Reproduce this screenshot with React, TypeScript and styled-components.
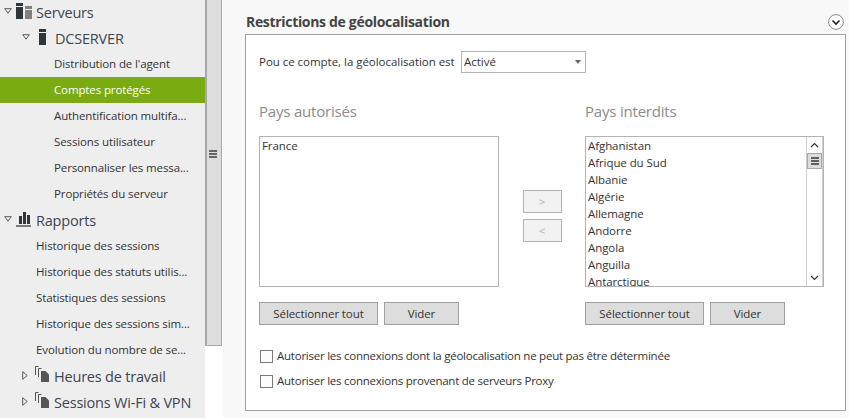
import React from 'react';
import styled, { createGlobalStyle } from 'styled-components';

const GlobalStyle = createGlobalStyle`
  html, body {
    margin: 0;
    padding: 0;
    overflow: hidden;
    background: #f8f8f8;
    font-family: 'Open Sans', 'Noto Sans', sans-serif;
  }
  * { box-sizing: border-box; }
`;

const Page = styled.div`
  display: flex;
  width: 849px;
  height: 418px;
  overflow: hidden;
`;

const Sidebar = styled.nav`
  flex: none;
  width: 205px;
  height: 418px;
  background: #eeeeee;
  overflow: hidden;
`;

const SidebarList = styled.div`
  margin-top: -1px;
`;

const TreeRow = styled.div<{ $indent: number; $selected?: boolean }>`
  display: flex;
  align-items: center;
  height: 26px;
  padding-left: ${p => p.$indent}px;
  padding-bottom: 2px;
  background: ${p => (p.$selected ? '#7aab10' : 'transparent')};
  color: ${p => (p.$selected ? '#ffffff' : '#333333')};
  font-size: 11.5px;
  letter-spacing: -0.12px;
  white-space: nowrap;
`;

const GroupRow = styled(TreeRow)`
  padding-bottom: 0;
  font-size: 14.5px;
  letter-spacing: -0.2px;
  color: #3c4650;
`;

const Caret = styled.svg<{ $gap: number }>`
  flex: none;
  margin-right: ${p => p.$gap}px;
  margin-bottom: 2px;
`;

const NodeIcon = styled.svg<{ $gap: number; $lift?: number }>`
  flex: none;
  margin-right: ${p => p.$gap}px;
  margin-bottom: ${p => p.$lift ?? 2}px;
`;

const SideScroll = styled.div`
  flex: none;
  display: flex;
  flex-direction: column;
  width: 17px;
  height: 418px;
  background: #ffffff;
`;

const SideThumb = styled.div`
  display: flex;
  flex-direction: column;
  align-items: center;
  gap: 1px;
  height: 346px;
  padding: 150px 2px 0 0;
  background: #dddddd;
  border-left: 2px solid #a8a8a8;
  border-right: 1px solid #a8a8a8;
  border-bottom: 1px solid #a8a8a8;
`;

const GripLine = styled.span`
  display: block;
  width: 8px;
  height: 2px;
  background: #666666;
`;

const Main = styled.main`
  flex: 1;
  min-width: 0;
  padding: 0 3px 0 22px;
  background: #f8f8f8;
  border-left: 1px solid #ffffff;
`;

const SectionHeader = styled.header`
  display: flex;
  align-items: center;
  justify-content: space-between;
  height: 34px;
  padding: 9px 2px 0 1px;
`;

const SectionTitle = styled.h2`
  margin: 0;
  font-size: 14px;
  font-weight: 700;
  letter-spacing: -0.32px;
  color: #444444;
`;

const Panel = styled.section`
  height: 377px;
  padding: 16px 20px 0 13px;
  background: #ffffff;
  border: 1px solid #a0a0a0;
`;

const StatusRow = styled.div`
  display: flex;
  align-items: center;
  height: 22px;
  color: #333333;
  font-size: 11.5px;
  letter-spacing: -0.03px;
`;

const StatusLabel = styled.span`
  flex: none;
  width: 202px;
  padding-bottom: 2px;
`;

const Select = styled.div`
  display: flex;
  align-items: center;
  justify-content: space-between;
  width: 125px;
  height: 22px;
  padding: 0 4px 2px 2px;
  border: 1px solid #b4b4b4;
  background: #ffffff;
`;

const SelectArrow = styled.span`
  width: 0;
  height: 0;
  margin-top: 2px;
  border-left: 3.5px solid transparent;
  border-right: 3.5px solid transparent;
  border-top: 4px solid #666666;
`;

const Transfer = styled.div`
  display: grid;
  grid-template-columns: 240px 86px 239px;
  grid-template-rows: 63px 151px 38px;
`;

const ColumnTitle = styled.h3`
  margin: 0;
  padding-top: 28px;
  font-size: 15px;
  font-weight: 400;
  letter-spacing: -0.2px;
  color: #8b8b8b;
`;

const ListBox = styled.div`
  position: relative;
  height: 151px;
  padding: 0 2px;
  overflow: hidden;
  background: #ffffff;
  border: 1px solid #b4b4b4;
`;

const ListItem = styled.div`
  height: 17px;
  line-height: 17px;
  font-size: 11.5px;
  letter-spacing: -0.08px;
  color: #333333;
`;

/* sits over the list content like the native scrollbar */
const ListScroll = styled.div`
  position: absolute;
  top: 0;
  right: 0;
  bottom: 0;
  display: flex;
  flex-direction: column;
  width: 17px;
  background: #ffffff;
  border-left: 1px solid #cfcfcf;
  border-right: 1px solid #cfcfcf;
`;

const ScrollButton = styled.div`
  display: flex;
  align-items: center;
  justify-content: center;
  flex: none;
  height: 16px;
`;

const ScrollThumb = styled.div`
  display: flex;
  flex-direction: column;
  align-items: center;
  justify-content: center;
  gap: 1px;
  flex: none;
  height: 16px;
  background: #dcdcdc;
  border: 1px solid #a8a8a8;
`;

const ThumbLine = styled.span`
  display: block;
  width: 8px;
  height: 2px;
  background: #606060;
`;

const ScrollTrack = styled.div`
  flex: 1;
`;

const MoveButtons = styled.div`
  display: flex;
  flex-direction: column;
  align-items: center;
  gap: 6px;
  padding-top: 54px;
`;

const MoveButton = styled.button`
  width: 39px;
  height: 23px;
  padding: 0;
  background: #f2f2f2;
  border: 1px solid #b4b4b4;
  color: #b0b0b0;
  font-family: inherit;
  font-size: 11.5px;
`;

const ActionRow = styled.div`
  display: flex;
  gap: 6px;
  padding-top: 15px;
`;

const ActionButton = styled.button<{ $width: number }>`
  width: ${p => p.$width}px;
  height: 23px;
  padding: 0;
  background: #dddddd;
  border: 1px solid #a0a0a0;
  color: #333333;
  font-family: inherit;
  font-size: 11.5px;
  letter-spacing: -0.1px;
`;

const Options = styled.div`
  display: flex;
  flex-direction: column;
  gap: 11px;
  margin-top: 24px;
  padding-left: 1px;
`;

const OptionRow = styled.label`
  display: flex;
  align-items: center;
  gap: 4px;
  height: 14px;
  font-size: 11.5px;
  letter-spacing: -0.24px;
  color: #333333;
  white-space: nowrap;
`;

const OptionText = styled.span`
  padding-bottom: 2px;
`;

const CheckBox = styled.span`
  flex: none;
  width: 13px;
  height: 13px;
  background: #fcfcfc;
  border: 1px solid #7a7a7a;
`;

const CaretDown = ({ gap = 4 }: { gap?: number }) => (
  <Caret $gap={gap} width="8" height="6" viewBox="0 0 8 6" fill="none">
    <path d="M0.7 0.7H7.3L4 5.2Z" stroke="#5a5a5a" strokeWidth="1" />
  </Caret>
);

const CaretRight = () => (
  <Caret $gap={7} width="6" height="9" viewBox="0 0 6 9" fill="none">
    <path d="M0.7 0.7V8.3L5.2 4.5Z" stroke="#5a5a5a" strokeWidth="1" />
  </Caret>
);

const ServersIcon = () => (
  <NodeIcon $gap={4} width="16" height="17" viewBox="0 0 16 17">
    <rect x="0" y="0" width="7" height="3" fill="#2f363b" />
    <rect x="0" y="4" width="7" height="12" fill="#2f363b" />
    <rect x="9" y="3" width="7" height="3" fill="#808080" />
    <rect x="9" y="7" width="7" height="9" fill="#808080" />
  </NodeIcon>
);

const ServerIcon = () => (
  <NodeIcon $gap={9} width="7" height="17" viewBox="0 0 7 17">
    <rect x="0" y="0" width="7" height="3" fill="#2f363b" />
    <rect x="0" y="4" width="7" height="12" fill="#2f363b" />
  </NodeIcon>
);

const ChartIcon = () => (
  <NodeIcon $gap={4} width="16" height="16" viewBox="0 0 16 16">
    <rect x="3" y="5" width="3" height="8" fill="#2f363b" />
    <rect x="7" y="1" width="3" height="12" fill="#2f363b" />
    <rect x="11" y="4" width="3" height="9" fill="#2f363b" />
    <rect x="0" y="14" width="15" height="2" fill="#7a7a7a" />
  </NodeIcon>
);

const PagesIcon = () => (
  <NodeIcon $gap={5} $lift={4} width="14" height="16" viewBox="0 0 14 16">
    <path d="M0.5 0.5H3.5M0.5 0.5V9" stroke="#555" fill="none" />
    <path d="M3.5 2.5H6.5M3.5 2.5V11" stroke="#555" fill="none" />
    <path d="M6 5H10.5L14 8.5V16H6Z" fill="#555" />
  </NodeIcon>
);

const ChevronCircle = () => (
  <svg width="16" height="16" viewBox="0 0 16 16" fill="none">
    <circle cx="8" cy="8" r="7.4" stroke="#8a8a8a" fill="#ffffff" />
    <path d="M4.5 6.5L8 10L11.5 6.5" stroke="#222" strokeWidth="1.6" />
  </svg>
);

const serverRows = [
  'Distribution de l\'agent',
  'Comptes protégés',
  'Authentification multifa...',
  'Sessions utilisateur',
  'Personnaliser les messa...',
  'Propriétés du serveur',
];

const reportRows = [
  'Historique des sessions',
  'Historique des statuts utilis...',
  'Statistiques des sessions',
  'Historique des sessions sim...',
  'Evolution du nombre de se...',
];

const countries = [
  'Afghanistan',
  'Afrique du Sud',
  'Albanie',
  'Algérie',
  'Allemagne',
  'Andorre',
  'Angola',
  'Anguilla',
  'Antarctique',
];

const App: React.FC = () => {
  return (
    <Page>
      <GlobalStyle />
      <Sidebar>
        <SidebarList>
          <GroupRow $indent={4}>
            <CaretDown />
            <ServersIcon />
            Serveurs
          </GroupRow>
          <GroupRow $indent={22}>
            <CaretDown gap={9} />
            <ServerIcon />
            DCSERVER
          </GroupRow>
          {serverRows.map(row => (
            <TreeRow key={row} $indent={54} $selected={row === 'Comptes protégés'}>
              {row}
            </TreeRow>
          ))}
          <GroupRow $indent={4}>
            <CaretDown />
            <ChartIcon />
            Rapports
          </GroupRow>
          {reportRows.map(row => (
            <TreeRow key={row} $indent={36}>
              {row}
            </TreeRow>
          ))}
          <GroupRow $indent={22}>
            <CaretRight />
            <PagesIcon />
            Heures de travail
          </GroupRow>
          <GroupRow $indent={22}>
            <CaretRight />
            <PagesIcon />
            Sessions Wi-Fi &amp; VPN
          </GroupRow>
        </SidebarList>
      </Sidebar>
      <SideScroll>
        <SideThumb>
          <GripLine />
          <GripLine />
          <GripLine />
        </SideThumb>
      </SideScroll>
      <Main>
        <SectionHeader>
          <SectionTitle>Restrictions de géolocalisation</SectionTitle>
          <ChevronCircle />
        </SectionHeader>
        <Panel>
          <StatusRow>
            <StatusLabel>Pou ce compte, la géolocalisation est</StatusLabel>
            <Select>
              Activé
              <SelectArrow />
            </Select>
          </StatusRow>
          <Transfer>
            <ColumnTitle>Pays autorisés</ColumnTitle>
            <span />
            <ColumnTitle>Pays interdits</ColumnTitle>
            <ListBox>
              <ListItem>France</ListItem>
            </ListBox>
            <MoveButtons>
              <MoveButton>&gt;</MoveButton>
              <MoveButton>&lt;</MoveButton>
            </MoveButtons>
            <ListBox>
              {countries.map(country => (
                <ListItem key={country}>{country}</ListItem>
              ))}
              <ListScroll>
                <ScrollButton>
                  <svg width="9" height="6" viewBox="0 0 9 6" fill="none">
                    <path d="M1 5L4.5 1.5L8 5" stroke="#333" strokeWidth="1.2" />
                  </svg>
                </ScrollButton>
                <ScrollThumb>
                  <ThumbLine />
                  <ThumbLine />
                  <ThumbLine />
                </ScrollThumb>
                <ScrollTrack />
                <ScrollButton>
                  <svg width="9" height="6" viewBox="0 0 9 6" fill="none">
                    <path d="M1 1L4.5 4.5L8 1" stroke="#333" strokeWidth="1.2" />
                  </svg>
                </ScrollButton>
              </ListScroll>
            </ListBox>
            <ActionRow>
              <ActionButton $width={119}>Sélectionner tout</ActionButton>
              <ActionButton $width={75}>Vider</ActionButton>
            </ActionRow>
            <span />
            <ActionRow>
              <ActionButton $width={119}>Sélectionner tout</ActionButton>
              <ActionButton $width={75}>Vider</ActionButton>
            </ActionRow>
          </Transfer>
          <Options>
            <OptionRow>
              <CheckBox />
              <OptionText>Autoriser les connexions dont la géolocalisation ne peut pas être déterminée</OptionText>
            </OptionRow>
            <OptionRow>
              <CheckBox />
              <OptionText>Autoriser les connexions provenant de serveurs Proxy</OptionText>
            </OptionRow>
          </Options>
        </Panel>
      </Main>
    </Page>
  );
};

export default App;
